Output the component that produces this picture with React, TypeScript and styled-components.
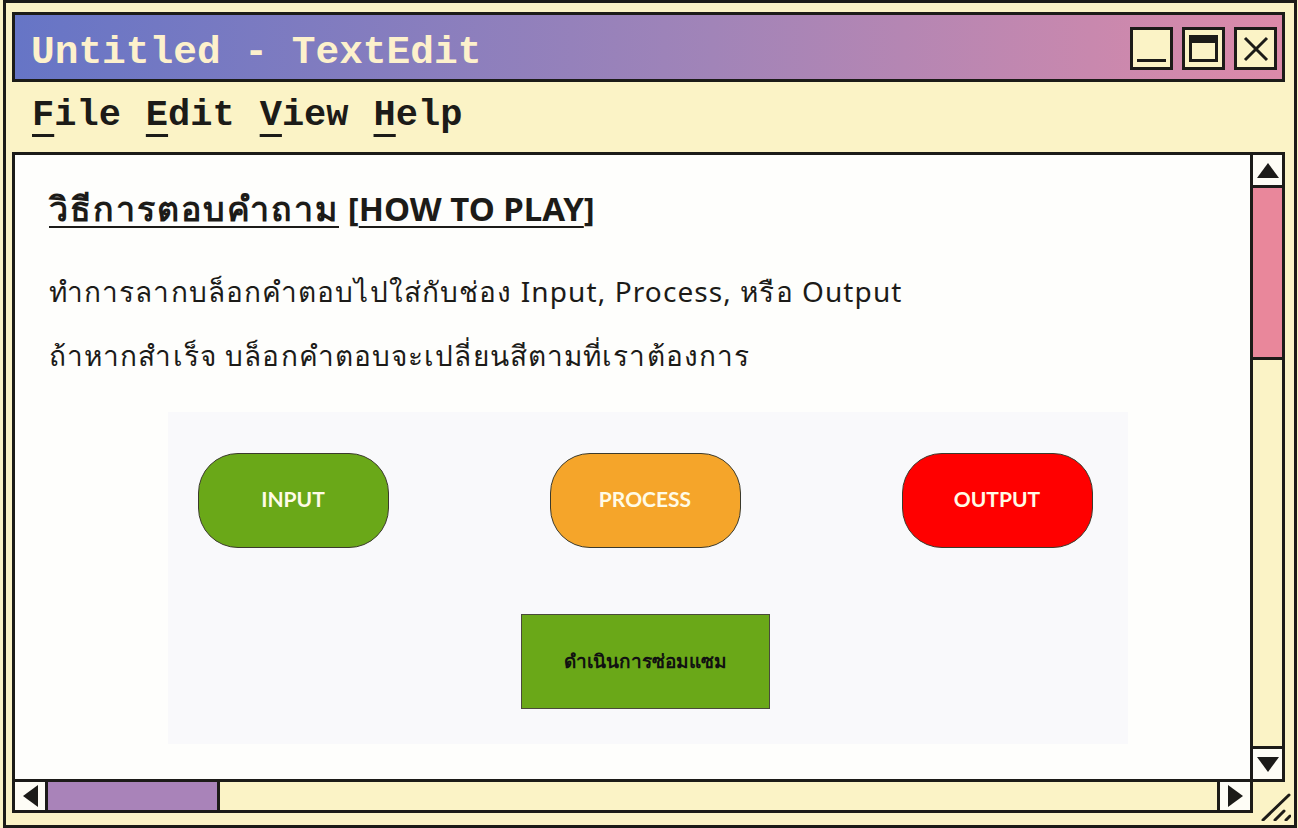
import React from 'react'
import { styled, createGlobalStyle } from 'styled-components';

const GlobalStyle = createGlobalStyle`
    html, body {
        margin: 0;
        padding: 0;
        background: #fbf3c6;
        overflow: hidden;
    }
`;

const INK = '#1c1b18';
const CREAM = '#fbf3c6';

export default function App() {
    return (
        <>
            <GlobalStyle />
            <Window>
                <TitleBar>
                    <Title>Untitled - TextEdit</Title>
                    <Controls>
                        <CtrlButton aria-label="minimize">
                            <MinLine />
                        </CtrlButton>
                        <CtrlButton aria-label="maximize">
                            <MaxFrame />
                        </CtrlButton>
                        <CtrlButton aria-label="close">
                            <svg width="30" height="30" viewBox="0 0 30 30">
                                <path d="M4 4 L26 26 M26 4 L4 26" stroke={INK} strokeWidth="3" />
                            </svg>
                        </CtrlButton>
                    </Controls>
                </TitleBar>
                <MenuBar>
                    <MenuItem><Key>F</Key>ile</MenuItem>
                    <MenuItem><Key>E</Key>dit</MenuItem>
                    <MenuItem><Key>V</Key>iew</MenuItem>
                    <MenuItem><Key>H</Key>elp</MenuItem>
                </MenuBar>
                <Frame>
                    <Document>
                        <Heading>
                            <Underlined $spacing={2}>วิธีการตอบคำถาม</Underlined>{' '}
                            <LatinTag>[<Underlined $spacing={0}>HOW TO PLAY</Underlined>]</LatinTag>
                        </Heading>
                        <Para>ทำการลากบล็อกคำตอบไปใส่กับช่อง Input, Process, หรือ Output</Para>
                        <Para>ถ้าหากสำเร็จ บล็อกคำตอบจะเปลี่ยนสีตามที่เราต้องการ</Para>
                        <Board>
                            <SlotRow>
                                <Slot $color="#6aa818">INPUT</Slot>
                                <Slot $color="#f5a52a">PROCESS</Slot>
                                <Slot $color="#ff0000">OUTPUT</Slot>
                            </SlotRow>
                            <AnswerBlock>ดำเนินการซ่อมแซม</AnswerBlock>
                        </Board>
                    </Document>
                    <VScroll>
                        <ArrowBox $edge="bottom">
                            <svg width="22" height="15" viewBox="0 0 22 15"><polygon points="11,0 22,15 0,15" fill={INK} /></svg>
                        </ArrowBox>
                        <VThumb />
                        <Track />
                        <ArrowBox $edge="top">
                            <svg width="22" height="15" viewBox="0 0 22 15"><polygon points="0,0 22,0 11,15" fill={INK} /></svg>
                        </ArrowBox>
                    </VScroll>
                    <HScroll>
                        <ArrowBox $edge="right">
                            <svg width="15" height="22" viewBox="0 0 15 22"><polygon points="15,0 15,22 0,11" fill={INK} /></svg>
                        </ArrowBox>
                        <HThumb />
                        <Track />
                        <ArrowBox $edge="left">
                            <svg width="15" height="22" viewBox="0 0 15 22"><polygon points="0,0 15,11 0,22" fill={INK} /></svg>
                        </ArrowBox>
                    </HScroll>
                    <Corner>
                        <svg width="34" height="34" viewBox="0 0 34 34">
                            <path d="M6 33 L32 8 M18 33 L27 24 M29 33 L33 29" stroke={INK} strokeWidth="3" strokeLinecap="round" />
                        </svg>
                    </Corner>
                </Frame>
            </Window>
        </>
    )
}

const Window = styled.div`
    box-sizing: border-box;
    margin-left: 3px;
    width: 1294px;
    height: 828px;
    border: 3px solid ${INK};
    background: ${CREAM};
    padding: 9px 9px 12px 6px;
    display: flex;
    flex-direction: column;
`;
const TitleBar = styled.div`
    box-sizing: border-box;
    height: 70px;
    border: 3px solid ${INK};
    background: linear-gradient(90deg, #6675c6 0%, #a184b8 55%, #dc8aa9 100%);
    display: flex;
    align-items: center;
    justify-content: space-between;
    padding: 0 5px 0 16px;
`;
const Title = styled.div`
    font-family: "Liberation Mono", "Courier New", monospace;
    font-weight: 700;
    font-size: 39.5px;
    line-height: 1;
    color: #fdf1cc;
    padding-top: 12px;
`;
const Controls = styled.div`
    display: flex;
    gap: 9px;
    padding-top: 3px;
`;
const CtrlButton = styled.div`
    box-sizing: border-box;
    width: 43px;
    height: 43px;
    border: 3px solid ${INK};
    background: ${CREAM};
    display: flex;
    align-items: center;
    justify-content: center;
`;
const MinLine = styled.div`
    width: 29px;
    height: 3px;
    background: ${INK};
    margin-top: 24px;
`;
const MaxFrame = styled.div`
    box-sizing: border-box;
    width: 29px;
    height: 27px;
    border: 3px solid ${INK};
    border-top-width: 8px;
`;
const MenuBar = styled.div`
    height: 70px;
    display: flex;
    align-items: center;
    gap: 25px;
    padding: 0 0 4px 20px;
    box-sizing: border-box;
`;
const MenuItem = styled.span`
    font-family: "Liberation Mono", "Courier New", monospace;
    font-weight: 700;
    font-size: 37px;
    line-height: 1;
    color: ${INK};
`;
const Key = styled.span`
    text-decoration: underline;
    text-decoration-thickness: 3px;
    text-underline-offset: 9px;
`;
const Frame = styled.div`
    flex: 1;
    display: grid;
    grid-template-columns: 1fr 35px;
    grid-template-rows: 1fr 34px;
    min-height: 0;
`;
const Document = styled.div`
    background: #fefefc;
    border-top: 3px solid ${INK};
    border-left: 3px solid ${INK};
    padding: 33px 0 0 34px;
    overflow: hidden;
    font-family: "Noto Sans", sans-serif;
    color: ${INK};
`;
const Heading = styled.div`
    font-size: 34px;
    font-weight: 700;
    line-height: 1.2;
    margin-bottom: 46px;
`;
const Underlined = styled.span<{ $spacing: number }>`
    letter-spacing: ${(p) => p.$spacing}px;
    text-decoration: underline;
    text-decoration-thickness: 2px;
    text-underline-offset: 5px;
`;
const LatinTag = styled.span`
    font-size: 33px;
`;
const Para = styled.div`
    font-size: 28px;
    line-height: 1.2;
    letter-spacing: 1.1px;
    & + & {
        margin-top: 31px;
    }
`;
const Board = styled.div`
    box-sizing: border-box;
    width: 960px;
    height: 332px;
    margin: 39px 0 0 119px;
    background: #f9f9fb;
    padding: 41px 35px 0 29px;
    display: flex;
    flex-direction: column;
    align-items: center;
    gap: 66px;
`;
const SlotRow = styled.div`
    display: flex;
    gap: 161px;
`;
const Slot = styled.div<{ $color: string }>`
    box-sizing: border-box;
    width: 191px;
    height: 95px;
    border-radius: 40px;
    border: 1.5px solid #3b3a2c;
    background: ${(p) => p.$color};
    color: #fffbe6;
    font-family: Lato, sans-serif;
    font-weight: 700;
    font-size: 21px;
    display: flex;
    align-items: center;
    justify-content: center;
    padding-bottom: 4px;
`;
const AnswerBlock = styled.div`
    box-sizing: border-box;
    width: 249px;
    height: 95px;
    background: #6aa818;
    border: 1px solid #4a4a3a;
    display: flex;
    align-items: center;
    justify-content: center;
    font-family: "Noto Sans", sans-serif;
    font-weight: 700;
    font-size: 19px;
    color: #111;
`;
const VScroll = styled.div`
    border: 3px solid ${INK};
    margin-bottom: -3px;
    display: flex;
    flex-direction: column;
    background: ${CREAM};
`;
const HScroll = styled.div`
    border: 3px solid ${INK};
    margin-right: -3px;
    display: flex;
    background: ${CREAM};
`;
const ArrowBox = styled.div<{ $edge: 'top' | 'bottom' | 'left' | 'right' }>`
    box-sizing: border-box;
    flex: 0 0 33px;
    background: #fefdf6;
    border-${(p) => p.$edge}: 3px solid ${INK};
    display: flex;
    align-items: center;
    justify-content: center;
`;
const VThumb = styled.div`
    flex: 0 0 172px;
    box-sizing: border-box;
    background: #e9879b;
    border-bottom: 3px solid ${INK};
`;
const HThumb = styled.div`
    flex: 0 0 172px;
    box-sizing: border-box;
    background: #a983b9;
    border-right: 3px solid ${INK};
`;
const Track = styled.div`
    flex: 1;
`;
const Corner = styled.div`
    display: flex;
    align-items: flex-end;
    justify-content: flex-end;
    margin: 0 -6px -8px 0;
`;
